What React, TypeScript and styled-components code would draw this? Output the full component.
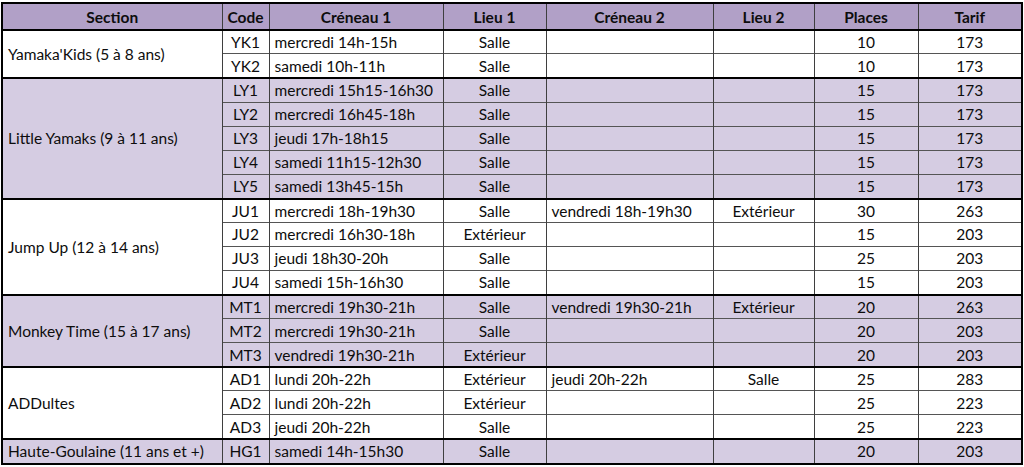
import styled, { createGlobalStyle } from 'styled-components';

type Slot = {
  code: string;
  c1: string;
  l1: string;
  c2?: string;
  l2?: string;
  places: number;
  tarif: number;
};

type Group = { section: string; slots: Slot[] };

const groups: Group[] = [
  {
    section: "Yamaka'Kids (5 à 8 ans)",
    slots: [
      { code: 'YK1', c1: 'mercredi 14h-15h', l1: 'Salle', places: 10, tarif: 173 },
      { code: 'YK2', c1: 'samedi 10h-11h', l1: 'Salle', places: 10, tarif: 173 },
    ],
  },
  {
    section: 'Little Yamaks (9 à 11 ans)',
    slots: [
      { code: 'LY1', c1: 'mercredi 15h15-16h30', l1: 'Salle', places: 15, tarif: 173 },
      { code: 'LY2', c1: 'mercredi 16h45-18h', l1: 'Salle', places: 15, tarif: 173 },
      { code: 'LY3', c1: 'jeudi 17h-18h15', l1: 'Salle', places: 15, tarif: 173 },
      { code: 'LY4', c1: 'samedi 11h15-12h30', l1: 'Salle', places: 15, tarif: 173 },
      { code: 'LY5', c1: 'samedi 13h45-15h', l1: 'Salle', places: 15, tarif: 173 },
    ],
  },
  {
    section: 'Jump Up (12 à 14 ans)',
    slots: [
      { code: 'JU1', c1: 'mercredi 18h-19h30', l1: 'Salle', c2: 'vendredi 18h-19h30', l2: 'Extérieur', places: 30, tarif: 263 },
      { code: 'JU2', c1: 'mercredi 16h30-18h', l1: 'Extérieur', places: 15, tarif: 203 },
      { code: 'JU3', c1: 'jeudi 18h30-20h', l1: 'Salle', places: 25, tarif: 203 },
      { code: 'JU4', c1: 'samedi 15h-16h30', l1: 'Salle', places: 15, tarif: 203 },
    ],
  },
  {
    section: 'Monkey Time (15 à 17 ans)',
    slots: [
      { code: 'MT1', c1: 'mercredi 19h30-21h', l1: 'Salle', c2: 'vendredi 19h30-21h', l2: 'Extérieur', places: 20, tarif: 263 },
      { code: 'MT2', c1: 'mercredi 19h30-21h', l1: 'Salle', places: 20, tarif: 203 },
      { code: 'MT3', c1: 'vendredi 19h30-21h', l1: 'Extérieur', places: 20, tarif: 203 },
    ],
  },
  {
    section: 'ADDultes',
    slots: [
      { code: 'AD1', c1: 'lundi 20h-22h', l1: 'Extérieur', c2: 'jeudi 20h-22h', l2: 'Salle', places: 25, tarif: 283 },
      { code: 'AD2', c1: 'lundi 20h-22h', l1: 'Extérieur', places: 25, tarif: 223 },
      { code: 'AD3', c1: 'jeudi 20h-22h', l1: 'Salle', places: 25, tarif: 223 },
    ],
  },
  {
    section: 'Haute-Goulaine (11 ans et +)',
    slots: [{ code: 'HG1', c1: 'samedi 14h-15h30', l1: 'Salle', places: 20, tarif: 203 }],
  },
];

const columns = [
  { title: 'Section', width: 220 },
  { title: 'Code', width: 47 },
  { title: 'Créneau 1', width: 174 },
  { title: 'Lieu 1', width: 103 },
  { title: 'Créneau 2', width: 167 },
  { title: 'Lieu 2', width: 101 },
  { title: 'Places', width: 104 },
  { title: 'Tarif', width: 104 },
];

const GlobalStyle = createGlobalStyle`
  html, body {
    margin: 0;
    background: #ffffff;
  }
  body {
    font-family: Lato, "Liberation Sans", Arial, sans-serif;
    color: #0d0d0d;
  }
`;

const Page = styled.div`
  padding: 2px 1px 0 1px;
`;

const Table = styled.table`
  width: 1022px;
  table-layout: fixed;
  border-collapse: collapse;
  border: 2px solid #000;
  font-size: 15.5px;
`;

const HeadCell = styled.th`
  height: 25px;
  padding: 0;
  background: #b1a0c7;
  font-weight: 700;
  text-align: center;
  border-left: 1px solid #3f3f3f;
  border-bottom: 2px solid #000;
`;

const Row = styled.tr<{ $tint: boolean; $first: boolean }>`
  background: ${p => (p.$tint ? '#d5cce2' : '#ffffff')};
  border-top: ${p => (p.$first ? '2px solid #000' : '1px solid #555')};

  & > td {
    height: ${p => (p.$first ? '22.25px' : '23px')};
  }
`;

const Cell = styled.td<{ $align?: 'left' | 'center' }>`
  padding: 0 5px;
  text-align: ${p => p.$align ?? 'center'};
  vertical-align: middle;
  white-space: nowrap;
  border-left: 1px solid #3f3f3f;
  line-height: 20px;
`;

export default function App() {
  return (
    <Page>
      <GlobalStyle />
      <Table>
        <colgroup>
          {columns.map(c => (
            <col key={c.title} style={{ width: c.width }} />
          ))}
        </colgroup>
        <thead>
          <tr>
            {columns.map(c => (
              <HeadCell key={c.title}>{c.title}</HeadCell>
            ))}
          </tr>
        </thead>
        <tbody>
          {groups.map((g, gi) =>
            g.slots.map((s, si) => (
              <Row key={s.code} $tint={gi % 2 === 1} $first={si === 0}>
                {si === 0 && (
                  <Cell rowSpan={g.slots.length} $align="left">
                    {g.section}
                  </Cell>
                )}
                <Cell>{s.code}</Cell>
                <Cell $align="left">{s.c1}</Cell>
                <Cell>{s.l1}</Cell>
                <Cell $align="left">{s.c2 ?? ''}</Cell>
                <Cell>{s.l2 ?? ''}</Cell>
                <Cell>{s.places}</Cell>
                <Cell>{s.tarif}</Cell>
              </Row>
            ))
          )}
        </tbody>
      </Table>
    </Page>
  );
}
